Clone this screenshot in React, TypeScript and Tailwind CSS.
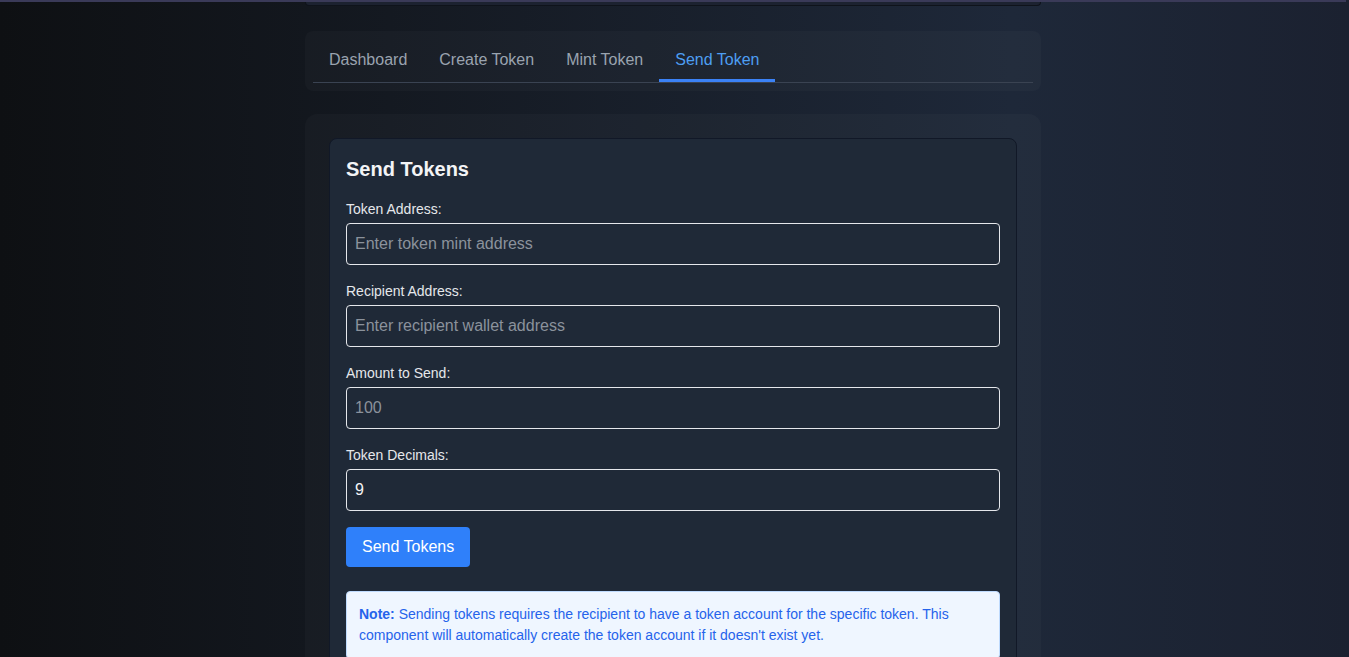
const fields = [
  { label: "Token Address:", placeholder: "Enter token mint address", value: "" },
  { label: "Recipient Address:", placeholder: "Enter recipient wallet address", value: "" },
  { label: "Amount to Send:", placeholder: "100", value: "" },
  { label: "Token Decimals:", placeholder: "", value: "9" },
];

const tabs = ["Dashboard", "Create Token", "Mint Token", "Send Token"];

export default function App() {
  return (
    <div className="min-h-screen bg-linear-to-r from-[#0e1013] via-[#1e2839] via-75% to-[#1b2130] pr-[3px] font-['Liberation_Sans',Arial,sans-serif]">
      {/* header edge */}
      <div className="h-[2px] bg-[#3a3a58]" />
      <div className="mx-auto w-[736px]">
        <div className="h-[4px] rounded-b-lg border-b border-x border-[#0f131b] bg-[#1c2230]" />

        {/* Tabs */}
        <div className="mt-[25px] rounded-lg bg-white/[0.025] p-2">
          <div className="flex border-b border-[#3a4352]">
            {tabs.map((t) => {
              const active = t === "Send Token";
              return (
                <button
                  key={t}
                  className={
                    active
                      ? "px-4 pt-[9px] pb-[7px] border-b-[3px] border-[#3b82f6] text-base text-[#4d9ef2]"
                      : "px-4 pt-[9px] pb-[7px] border-b-[3px] border-transparent text-base text-[#9aa3af]"
                  }
                >
                  {t}
                </button>
              );
            })}
          </div>
        </div>

        {/* Panel */}
        <div className="mt-[23px] rounded-xl bg-white/[0.025] p-6">
          <div className="rounded-lg border border-[#111827] bg-[#1f2937] p-4">
            <h2 className="mb-4 text-xl font-bold text-[#f3f4f6]">Send Tokens</h2>
            {fields.map((f) => (
              <div key={f.label} className="mb-4">
                <label className="mb-1 block text-sm text-[#e5e7eb]">{f.label}</label>
                <input
                  className="h-[42px] w-full rounded border border-[#e5e7eb] bg-transparent px-2 text-base text-[#f3f4f6] placeholder:text-[#8b929c] outline-none"
                  placeholder={f.placeholder}
                  defaultValue={f.value}
                />
              </div>
            ))}
            <button className="h-10 rounded bg-[#2f80fa] px-4 text-base text-white">Send Tokens</button>
            <div className="mt-6 rounded border border-[#bfdbfe] bg-[#eff6ff] px-3 py-3 text-sm leading-[21px] text-[#2563eb]">
              <strong>Note:</strong> Sending tokens requires the recipient to have a token account for the specific
              token. This component will automatically create the token account if it doesn't exist yet.
            </div>
          </div>
        </div>
      </div>
    </div>
  );
}
